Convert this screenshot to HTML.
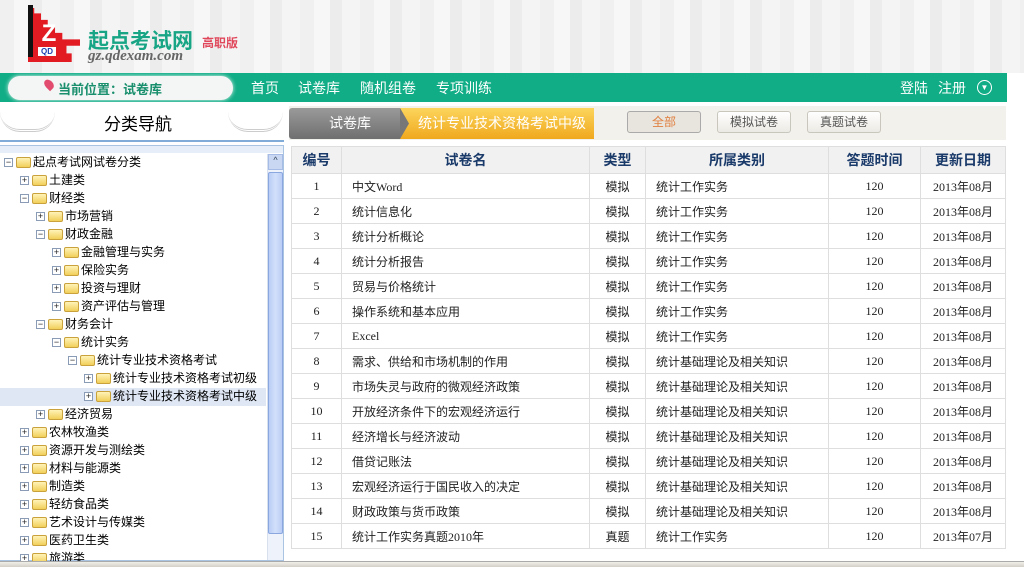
<!DOCTYPE html>
<html><head><meta charset="utf-8"><style>
*{margin:0;padding:0;box-sizing:border-box}
body{width:1024px;height:567px;overflow:hidden;background:#fff;font-family:"Liberation Sans","Noto Sans CJK SC",sans-serif;position:relative;font-size:12px;color:#222}
.abs{position:absolute}
#hdr{left:0;top:0;width:1024px;height:73px;background:repeating-linear-gradient(90deg,#f0f0f0 0 14px,#f7f7f7 14px 30px,#ececec 30px 42px,#f4f4f4 42px 60px),#f3f3f3}
#nav{left:0;top:73px;width:1007px;height:29px;background:#10ad86}
#nav span{position:absolute;top:5px;color:#fff;font-size:14px}
.tr{position:absolute;height:18px;line-height:18px;font-size:12px;white-space:nowrap;color:#000}
.tr b{display:inline-block;width:9px;height:9px;border:1px solid #8a9bb5;background:#fff;font-size:9px;line-height:7px;text-align:center;font-weight:normal;vertical-align:middle;margin-right:3px;color:#222}
.tr i{display:inline-block;width:15px;height:11px;background:linear-gradient(#fff3b8,#f1cf5a);border:1px solid #c9a23c;border-radius:2px;vertical-align:middle;margin-right:2px}
table{border-collapse:collapse;position:absolute;left:291px;top:146px;width:715px}
td,th{border:1px solid #dedede;height:25px;font-size:12px}
td{font-family:"Liberation Serif","Noto Sans CJK SC",serif;color:#222}
th{background:#f1f1f1;color:#1a3a6a;font-size:14px;height:27px}
td.c{text-align:center}
td.l{padding-left:10px}
.btn{position:absolute;top:111px;height:22px;width:74px;border:1px solid #c9c6bd;border-radius:3px;background:linear-gradient(#fff,#eceae4);text-align:center;line-height:20px;color:#555;font-size:12px}
</style></head><body>
<div id="hdr" class="abs"></div>
<div class="abs" style="left:28px;top:8px;width:52px;height:54px;background:#e21b23;clip-path:polygon(0 0,12% 0,12% 10%,25% 10%,25% 22%,38% 22%,38% 34%,52% 34%,52% 46%,66% 46%,66% 58%,100% 58%,100% 70%,74% 70%,74% 84%,84% 84%,84% 100%,0 100%)"></div>
<div class="abs" style="left:28px;top:5px;width:5px;height:52px;background:#111"></div>
<div class="abs" style="left:37px;top:20px;width:24px;height:28px;color:#fff;font-weight:bold;font-size:24px;line-height:28px;text-align:center">Z</div>
<div class="abs" style="left:38px;top:47px;width:18px;height:9px;background:#fff;color:#1d3fb0;font-size:8px;line-height:9px;font-weight:bold;text-align:center">QD</div>
<div class="abs" style="left:88px;top:25px;font-size:21px;font-weight:bold;color:#17a585">起点考试网</div>
<div class="abs" style="left:202px;top:34px;font-size:12px;font-weight:bold;color:#e0475b">高职版</div>
<div class="abs" style="left:88px;top:48px;font-size:15px;font-style:italic;font-weight:bold;color:#666;font-family:'Liberation Serif',serif">gz.qdexam.com</div>
<div id="nav" class="abs">
<div class="abs" style="left:8px;top:3px;width:225px;height:24px;background:#f3f6f4;border-radius:12px;box-shadow:0 0 4px #e8f3ef"></div>
<div class="abs" style="left:45px;top:6px;width:8px;height:11px;background:#e24d6f;border-radius:50% 50% 50% 0;transform:rotate(-45deg)"></div>
<span style="left:58px;top:6px;font-size:13px;font-weight:bold;color:#1a8f6e">当前位置：试卷库</span>
<span style="left:251px">首页</span><span style="left:298px">试卷库</span><span style="left:360px">随机组卷</span><span style="left:436px">专项训练</span>
<span style="left:900px">登陆</span><span style="left:938px">注册</span>
<div class="abs" style="left:977px;top:7px;width:15px;height:15px;border:1px solid #fff;border-radius:50%;color:#fff;font-size:8px;text-align:center;line-height:14px">▼</div>
</div>
<div class="abs" style="left:0;top:102px;width:290px;height:40px;background:#fff"></div>
<div class="abs" style="left:0;top:112px;width:55px;height:20px;border-bottom:3px double #ccc;border-radius:0 0 40px 40px"></div>
<div class="abs" style="left:228px;top:112px;width:55px;height:20px;border-bottom:3px double #ccc;border-radius:0 0 40px 40px"></div>
<div class="abs" style="left:104px;top:110px;font-size:17px;color:#000">分类导航</div>
<div class="abs" style="left:0;top:140px;width:284px;height:2px;background:#82acd8"></div>
<div class="abs" style="left:0;top:145px;width:284px;height:416px;border:1px solid #a9c3e2;border-left:none;background:#fff"></div>
<div class="abs" style="left:0;top:146px;width:283px;height:7px;background:#e6eef9"></div>
<div class="abs" style="left:267px;top:154px;width:16px;height:406px;background:#eef2fa;border-left:1px solid #d8e0ee"></div>
<div class="abs" style="left:268px;top:154px;width:15px;height:16px;background:#c9d7f2;border:1px solid #a6bce6;font-size:9px;text-align:center;color:#345">^</div>
<div class="abs" style="left:268px;top:172px;width:15px;height:362px;background:linear-gradient(90deg,#b9cdf5,#d2e0fa,#b9cdf5);border:1px solid #8aa7e0;border-radius:2px"></div>
<div class="abs" style="left:0;top:388px;width:266px;height:18px;background:#dfe7f4"></div>
<div class="tr" style="left:4px;top:153px"><b>−</b><i></i>起点考试网试卷分类</div>
<div class="tr" style="left:20px;top:171px"><b>+</b><i></i>土建类</div>
<div class="tr" style="left:20px;top:189px"><b>−</b><i></i>财经类</div>
<div class="tr" style="left:36px;top:207px"><b>+</b><i></i>市场营销</div>
<div class="tr" style="left:36px;top:225px"><b>−</b><i></i>财政金融</div>
<div class="tr" style="left:52px;top:243px"><b>+</b><i></i>金融管理与实务</div>
<div class="tr" style="left:52px;top:261px"><b>+</b><i></i>保险实务</div>
<div class="tr" style="left:52px;top:279px"><b>+</b><i></i>投资与理财</div>
<div class="tr" style="left:52px;top:297px"><b>+</b><i></i>资产评估与管理</div>
<div class="tr" style="left:36px;top:315px"><b>−</b><i></i>财务会计</div>
<div class="tr" style="left:52px;top:333px"><b>−</b><i></i>统计实务</div>
<div class="tr" style="left:68px;top:351px"><b>−</b><i></i>统计专业技术资格考试</div>
<div class="tr" style="left:84px;top:369px"><b>+</b><i></i>统计专业技术资格考试初级</div>
<div class="tr" style="left:84px;top:387px"><b>+</b><i></i>统计专业技术资格考试中级</div>
<div class="tr" style="left:36px;top:405px"><b>+</b><i></i>经济贸易</div>
<div class="tr" style="left:20px;top:423px"><b>+</b><i></i>农林牧渔类</div>
<div class="tr" style="left:20px;top:441px"><b>+</b><i></i>资源开发与测绘类</div>
<div class="tr" style="left:20px;top:459px"><b>+</b><i></i>材料与能源类</div>
<div class="tr" style="left:20px;top:477px"><b>+</b><i></i>制造类</div>
<div class="tr" style="left:20px;top:495px"><b>+</b><i></i>轻纺食品类</div>
<div class="tr" style="left:20px;top:513px"><b>+</b><i></i>艺术设计与传媒类</div>
<div class="tr" style="left:20px;top:531px"><b>+</b><i></i>医药卫生类</div>
<div class="tr" style="left:20px;top:549px;height:12px;overflow:hidden"><b>+</b><i></i>旅游类</div>
<div class="abs" style="left:289px;top:106px;width:717px;height:34px;background:#f3f1ec"></div>
<div class="abs" style="left:289px;top:108px;width:120px;height:31px;background:linear-gradient(#9a9a9a,#6f6f6f);color:#fff;font-size:14px;line-height:31px;padding-left:40px;border-radius:3px 0 0 3px">试卷库</div>
<div class="abs" style="left:400px;top:108px;width:194px;height:31px;background:linear-gradient(#fcd55c,#f0a81e);color:#fff;font-size:14px;line-height:31px;padding-left:18px;clip-path:polygon(0 0,100% 0,100% 100%,0 100%,8px 50%)">统计专业技术资格考试中级</div>
<div class="abs" style="left:400px;top:108px;width:9px;height:31px;background:#777;clip-path:polygon(0 0,100% 50%,0 100%)"></div>
<div class="btn" style="left:627px;background:#e8e5de;color:#e08040;border-color:#aaa">全部</div>
<div class="btn" style="left:717px">模拟试卷</div>
<div class="btn" style="left:807px">真题试卷</div>
<table>
<tr><th style="width:50px">编号</th><th style="width:248px">试卷名</th><th style="width:56px">类型</th><th style="width:183px">所属类别</th><th style="width:92px">答题时间</th><th>更新日期</th></tr>
<tr><td class="c">1</td><td class="l">中文Word</td><td class="c">模拟</td><td class="l">统计工作实务</td><td class="c">120</td><td class="c">2013年08月</td></tr>
<tr><td class="c">2</td><td class="l">统计信息化</td><td class="c">模拟</td><td class="l">统计工作实务</td><td class="c">120</td><td class="c">2013年08月</td></tr>
<tr><td class="c">3</td><td class="l">统计分析概论</td><td class="c">模拟</td><td class="l">统计工作实务</td><td class="c">120</td><td class="c">2013年08月</td></tr>
<tr><td class="c">4</td><td class="l">统计分析报告</td><td class="c">模拟</td><td class="l">统计工作实务</td><td class="c">120</td><td class="c">2013年08月</td></tr>
<tr><td class="c">5</td><td class="l">贸易与价格统计</td><td class="c">模拟</td><td class="l">统计工作实务</td><td class="c">120</td><td class="c">2013年08月</td></tr>
<tr><td class="c">6</td><td class="l">操作系统和基本应用</td><td class="c">模拟</td><td class="l">统计工作实务</td><td class="c">120</td><td class="c">2013年08月</td></tr>
<tr><td class="c">7</td><td class="l">Excel</td><td class="c">模拟</td><td class="l">统计工作实务</td><td class="c">120</td><td class="c">2013年08月</td></tr>
<tr><td class="c">8</td><td class="l">需求、供给和市场机制的作用</td><td class="c">模拟</td><td class="l">统计基础理论及相关知识</td><td class="c">120</td><td class="c">2013年08月</td></tr>
<tr><td class="c">9</td><td class="l">市场失灵与政府的微观经济政策</td><td class="c">模拟</td><td class="l">统计基础理论及相关知识</td><td class="c">120</td><td class="c">2013年08月</td></tr>
<tr><td class="c">10</td><td class="l">开放经济条件下的宏观经济运行</td><td class="c">模拟</td><td class="l">统计基础理论及相关知识</td><td class="c">120</td><td class="c">2013年08月</td></tr>
<tr><td class="c">11</td><td class="l">经济增长与经济波动</td><td class="c">模拟</td><td class="l">统计基础理论及相关知识</td><td class="c">120</td><td class="c">2013年08月</td></tr>
<tr><td class="c">12</td><td class="l">借贷记账法</td><td class="c">模拟</td><td class="l">统计基础理论及相关知识</td><td class="c">120</td><td class="c">2013年08月</td></tr>
<tr><td class="c">13</td><td class="l">宏观经济运行于国民收入的决定</td><td class="c">模拟</td><td class="l">统计基础理论及相关知识</td><td class="c">120</td><td class="c">2013年08月</td></tr>
<tr><td class="c">14</td><td class="l">财政政策与货币政策</td><td class="c">模拟</td><td class="l">统计基础理论及相关知识</td><td class="c">120</td><td class="c">2013年08月</td></tr>
<tr><td class="c">15</td><td class="l">统计工作实务真题2010年</td><td class="c">真题</td><td class="l">统计工作实务</td><td class="c">120</td><td class="c">2013年07月</td></tr>
</table>
<div class="abs" style="left:0;top:561px;width:1024px;height:6px;background:linear-gradient(#f0efe8,#d4d0c8);border-top:1px solid #aaa"></div>
</body></html>
